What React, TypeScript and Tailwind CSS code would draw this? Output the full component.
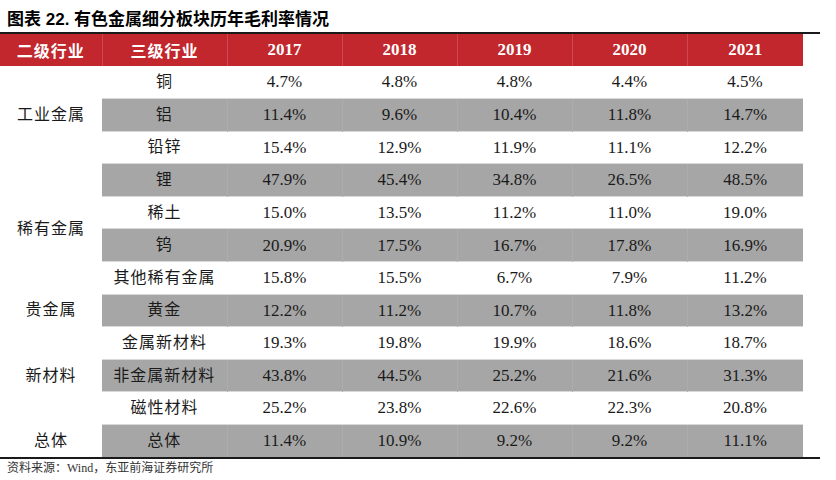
const years = ["2017", "2018", "2019", "2020", "2021"];

const rows: { group?: string; span?: number; name: string; values: string[] }[] = [
  { group: "工业金属", span: 3, name: "铜", values: ["4.7%", "4.8%", "4.8%", "4.4%", "4.5%"] },
  { name: "铝", values: ["11.4%", "9.6%", "10.4%", "11.8%", "14.7%"] },
  { name: "铅锌", values: ["15.4%", "12.9%", "11.9%", "11.1%", "12.2%"] },
  { group: "稀有金属", span: 4, name: "锂", values: ["47.9%", "45.4%", "34.8%", "26.5%", "48.5%"] },
  { name: "稀土", values: ["15.0%", "13.5%", "11.2%", "11.0%", "19.0%"] },
  { name: "钨", values: ["20.9%", "17.5%", "16.7%", "17.8%", "16.9%"] },
  { name: "其他稀有金属", values: ["15.8%", "15.5%", "6.7%", "7.9%", "11.2%"] },
  { group: "贵金属", span: 1, name: "黄金", values: ["12.2%", "11.2%", "10.7%", "11.8%", "13.2%"] },
  { group: "新材料", span: 3, name: "金属新材料", values: ["19.3%", "19.8%", "19.9%", "18.6%", "18.7%"] },
  { name: "非金属新材料", values: ["43.8%", "44.5%", "25.2%", "21.6%", "31.3%"] },
  { name: "磁性材料", values: ["25.2%", "23.8%", "22.6%", "22.3%", "20.8%"] },
  { group: "总体", span: 1, name: "总体", values: ["11.4%", "10.9%", "9.2%", "9.2%", "11.1%"] },
];

export default function App() {
  return (
    <div className="w-[836px] h-[480px] bg-white text-[#1a1a1a] font-['Liberation_Serif','Noto_Sans_CJK_SC',serif]">
      {/* 标题 */}
      <div className="h-[32px] pl-[7px] pt-[9px] text-[17px] leading-[22px] font-bold text-black font-['Liberation_Sans','Noto_Sans_CJK_SC',sans-serif]">
        图表 22. 有色金属细分板块历年毛利率情况
      </div>
      <div className="w-[820px] h-[2px] bg-[#1a1a1a]" />

      <table className="w-[803px] table-fixed border-collapse">
        <colgroup>
          <col className="w-[102px]" />
          <col className="w-[125px]" />
          <col className="w-[115px]" />
          <col className="w-[115px]" />
          <col className="w-[115px]" />
          <col className="w-[115px]" />
          <col className="w-[116px]" />
        </colgroup>
        <thead>
          <tr className="h-[32px] bg-[#c1272d] text-white text-[17px] font-bold">
            <th className="font-['Noto_Sans_CJK_SC',sans-serif] font-bold text-[16px] tracking-[1px]">二级行业</th>
            <th className="border-l border-[#c94a50] font-['Noto_Sans_CJK_SC',sans-serif] font-bold text-[16px] tracking-[1px]">三级行业</th>
            {years.map((y) => (
              <th key={y} className="border-l border-[#c94a50]">{y}</th>
            ))}
          </tr>
        </thead>
        <tbody className="text-[17px]">
          {rows.map((r, i) => {
            const gray = i % 2 === 1;
            const cell = gray
              ? "bg-[#a6a6a6] border-l border-[#adadad]"
              : "bg-white";
            const top = i > 0 ? "border-t border-t-[#d9d9d9]" : "";
            return (
              <tr key={r.name} className="h-[32.6px]">
                {r.group && (
                  <td rowSpan={r.span} className="text-center align-middle text-[16px] tracking-[1px] bg-white">
                    {r.group}
                  </td>
                )}
                <td className={`text-center text-[16px] tracking-[1px] ${gray ? "bg-[#a6a6a6]" : "bg-white"} ${top}`}>
                  {r.name}
                </td>
                {r.values.map((v, j) => (
                  <td key={j} className={`text-center ${cell} ${top}`}>
                    {v}
                  </td>
                ))}
              </tr>
            );
          })}
        </tbody>
      </table>
      <div className="w-[820px] h-[2px] bg-[#1a1a1a]" />

      <div className="pl-[7px] pt-[1px] text-[12px] leading-[16px] text-[#333]">
        资料来源：Wind，东亚前海证券研究所
      </div>
    </div>
  );
}
